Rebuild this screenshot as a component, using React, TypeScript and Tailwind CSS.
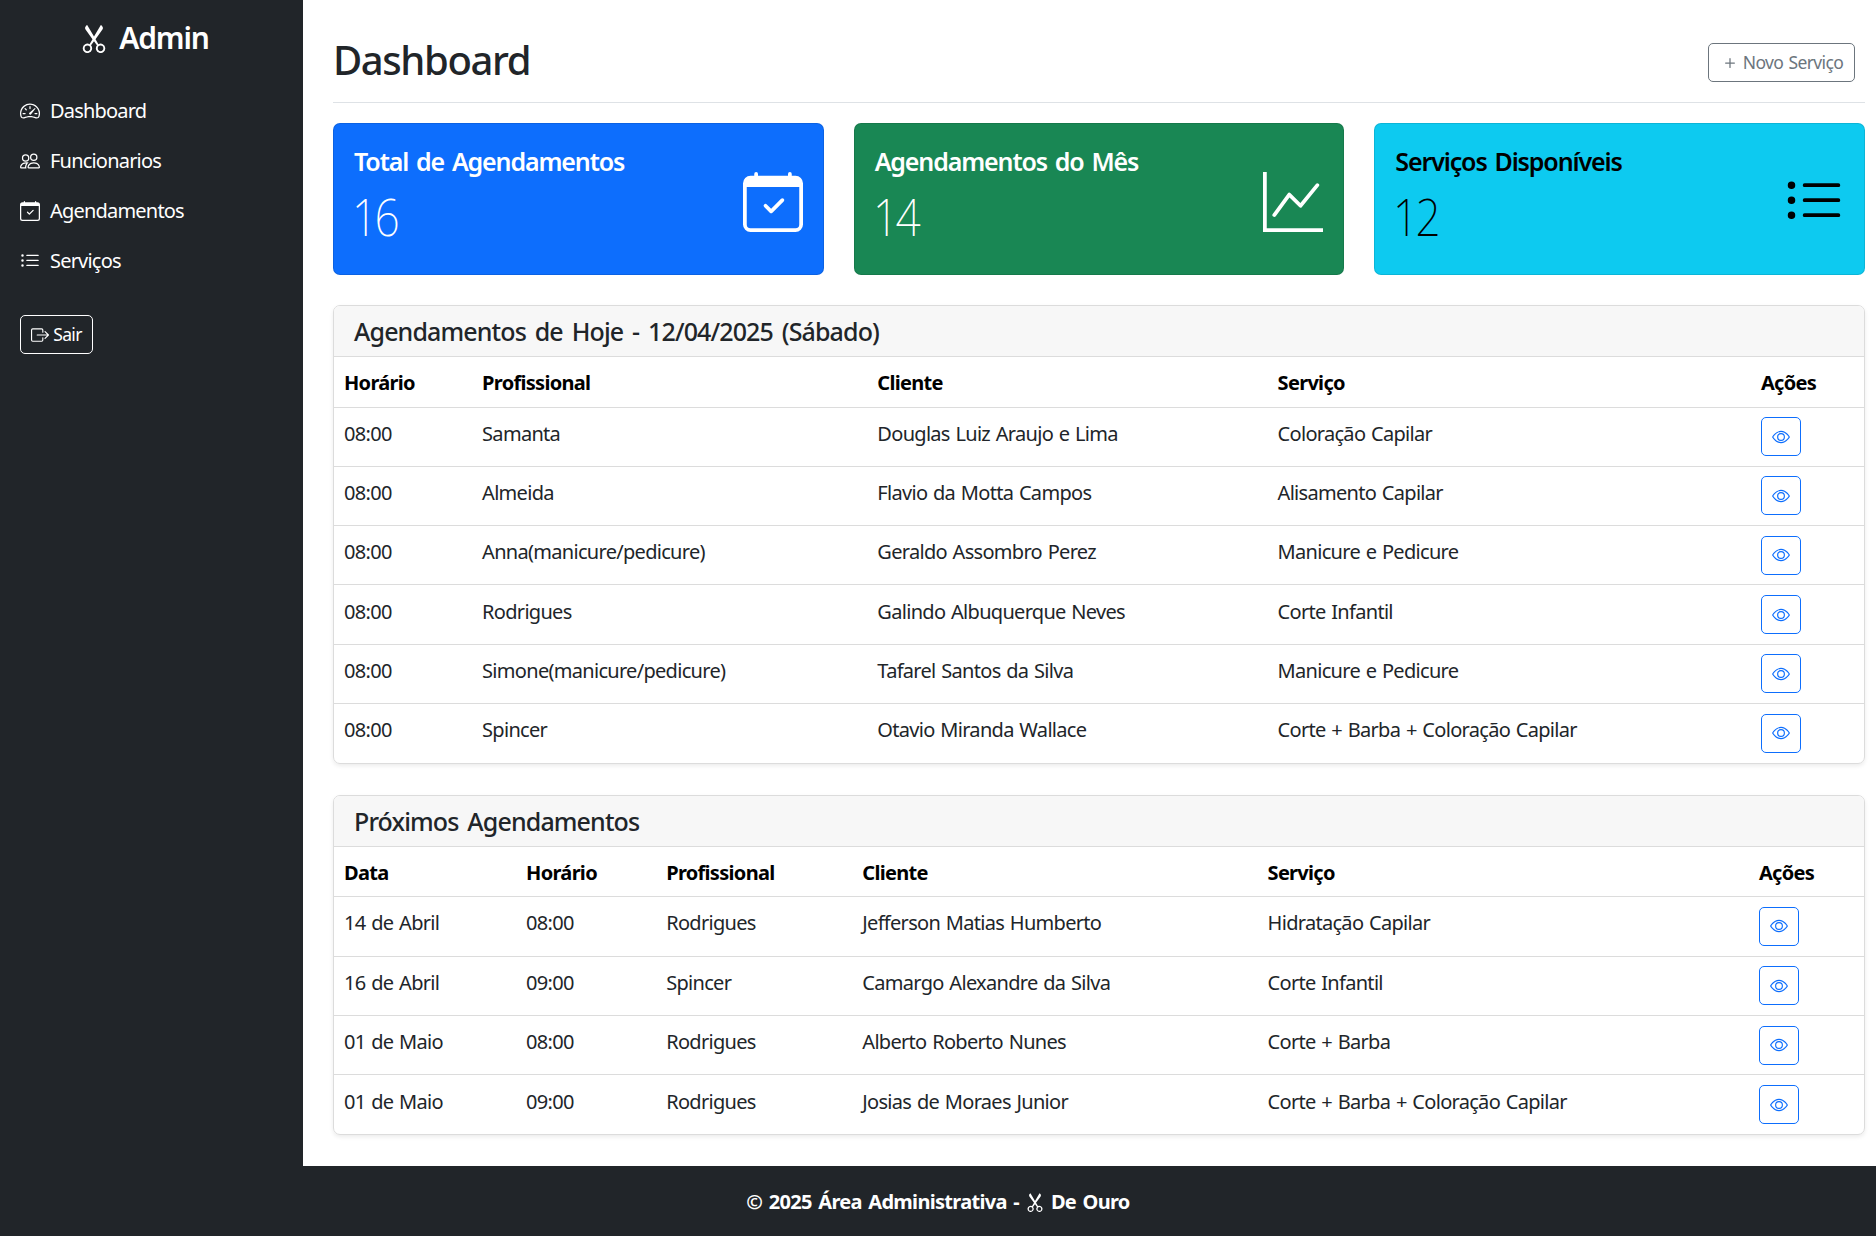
import { ReactNode } from "react";
import {
  BsBoxArrowRight,
  BsCalendarCheck,
  BsEye,
  BsGraphUp,
  BsListUl,
  BsPeople,
  BsPlus,
  BsScissors,
  BsSpeedometer2,
} from "react-icons/bs";

const todayRows = [
  ["08:00", "Samanta", "Douglas Luiz Araujo e Lima", "Coloração Capilar"],
  ["08:00", "Almeida", "Flavio da Motta Campos", "Alisamento Capilar"],
  ["08:00", "Anna(manicure/pedicure)", "Geraldo Assombro Perez", "Manicure e Pedicure"],
  ["08:00", "Rodrigues", "Galindo Albuquerque Neves", "Corte Infantil"],
  ["08:00", "Simone(manicure/pedicure)", "Tafarel Santos da Silva", "Manicure e Pedicure"],
  ["08:00", "Spincer", "Otavio Miranda Wallace", "Corte + Barba + Coloração Capilar"],
];

const nextRows = [
  ["14 de Abril", "08:00", "Rodrigues", "Jefferson Matias Humberto", "Hidratação Capilar"],
  ["16 de Abril", "09:00", "Spincer", "Camargo Alexandre da Silva", "Corte Infantil"],
  ["01 de Maio", "08:00", "Rodrigues", "Alberto Roberto Nunes", "Corte + Barba"],
  ["01 de Maio", "09:00", "Rodrigues", "Josias de Moraes Junior", "Corte + Barba + Coloração Capilar"],
];

const navItems = [
  { label: "Dashboard", icon: <BsSpeedometer2 size={20} /> },
  { label: "Funcionarios", icon: <BsPeople size={20} /> },
  { label: "Agendamentos", icon: <BsCalendarCheck size={20} /> },
  { label: "Serviços", icon: <BsListUl size={20} /> },
];

const StatCard = ({ title, value, icon, className }: { title: string; value: string; icon: ReactNode; className: string }) => (
  <div className={`flex h-[152px] items-center justify-between rounded-[7px] border border-black/10 pl-[20px] pr-[20px] ${className}`}>
    <div className="-mt-[7px]">
      <div className="text-[25px] font-semibold leading-[30px] tracking-[-0.045em] [word-spacing:2.5px]">{title}</div>
      <div className="-ml-[2px] mt-[10px] origin-left scale-x-85 text-[52px] font-extralight leading-[60px] tracking-[-0.06em]">{value}</div>
    </div>
    <div className="mt-[5px]">{icon}</div>
  </div>
);

const EyeButton = () => (
  <button className="flex h-[39px] w-[40px] items-center justify-center rounded-[5px] border border-[#0d6efd] text-[#0d6efd]">
    <BsEye size={18} />
  </button>
);

const DataTable = ({ title, heads, widths, rows }: { title: string; heads: string[]; widths: number[]; rows: string[][] }) => (
  <div className="overflow-hidden rounded-[7px] border border-[#dcdcdc] shadow-[0_2px_4px_rgba(0,0,0,0.08)]">
    <div className="border-b border-[#dcdcdc] bg-[#f7f7f7] px-[20px] py-[10px] text-[25px] font-medium leading-[30px] tracking-[-0.035em] text-[#212529] [word-spacing:3.2px]">
      {title}
    </div>
    <table className="w-full table-fixed border-collapse text-left text-[20px] leading-[30px] tracking-[-0.035em] text-[#212529] [word-spacing:1.2px]">
      <colgroup>
        {widths.map((w, i) => (
          <col key={i} style={{ width: w }} />
        ))}
      </colgroup>
      <thead>
        <tr className="border-b border-[#dcdcdc]">
          {heads.map((h) => (
            <th key={h} className="h-[50px] px-[10px] pt-[3px] font-bold text-black">
              {h}
            </th>
          ))}
        </tr>
      </thead>
      <tbody>
        {rows.map((row, i) => (
          <tr key={i} className={i < rows.length - 1 ? "border-b border-[#dcdcdc]" : ""}>
            {row.map((cell, j) => (
              <td key={j} className="h-[59.3px] px-[10px] pb-[13px] pt-[7px]">
                {cell}
              </td>
            ))}
            <td className="h-[59.3px] px-[10px]">
              <EyeButton />
            </td>
          </tr>
        ))}
      </tbody>
    </table>
  </div>
);

export default function App() {
  return (
    <div className="flex h-[1236px] flex-col overflow-hidden font-['Noto_Sans',sans-serif]">
      <div className="flex flex-1">
        {/* sidebar */}
        <aside className="w-[303px] shrink-0 bg-[#212529] pl-[20px] pr-[30px] text-white">
          <div className="mt-[19px] flex items-center justify-center gap-[10px] pr-[5px] text-[30px] font-semibold leading-[38px] tracking-[-0.04em]">
            <BsScissors size={30} />
            Admin
          </div>
          <nav className="mt-[29px] flex flex-col">
            {navItems.map((item) => (
              <div key={item.label} className="flex h-[50px] items-center gap-[10px] text-[20px] tracking-[-0.04em]">
                {item.icon}
                {item.label}
              </div>
            ))}
          </nav>
          <button className="mt-[29px] flex h-[39px] w-[73px] items-center justify-center gap-[4px] rounded-[5px] border border-white text-[17.5px] tracking-[-0.035em]">
            <BsBoxArrowRight size={18} />
            Sair
          </button>
        </aside>

        {/* main */}
        <main className="flex-1 pl-[30px] pr-[11px]">
          <div className="flex h-[103px] items-center justify-between border-b border-[#dee2e6] pr-[10px] pt-[20px]">
            <h1 className="-mt-[3px] text-[40px] font-medium leading-[48px] tracking-[-0.035em] text-[#212529]">Dashboard</h1>
            <button className="mt-[3px] flex h-[39px] w-[147px] items-center justify-center gap-[3px] rounded-[5px] border border-[#6c757d] text-[17.5px] tracking-[-0.035em] text-[#6c757d] [word-spacing:1.2px]">
              <BsPlus size={20} />
              Novo Serviço
            </button>
          </div>

          <div className="mt-[20px] grid grid-cols-3 gap-[30px]">
            <StatCard title="Total de Agendamentos" value="16" className="bg-[#0d6efd] text-white" icon={<BsCalendarCheck size={60} />} />
            <StatCard title="Agendamentos do Mês" value="14" className="bg-[#198754] text-white" icon={<BsGraphUp size={60} />} />
            <StatCard title="Serviços Disponíveis" value="12" className="bg-[#0dcaf0] text-black" icon={<BsListUl size={60} />} />
          </div>

          <div className="mt-[30px]">
            <DataTable
              title="Agendamentos de Hoje - 12/04/2025 (Sábado)"
              heads={["Horário", "Profissional", "Cliente", "Serviço", "Ações"]}
              widths={[138, 395, 400, 483, 113]}
              rows={todayRows}
            />
          </div>
          <div className="mt-[31px]">
            <DataTable
              title="Próximos Agendamentos"
              heads={["Data", "Horário", "Profissional", "Cliente", "Serviço", "Ações"]}
              widths={[182, 140, 196, 405, 491, 115]}
              rows={nextRows}
            />
          </div>
        </main>
      </div>

      {/* footer */}
      <footer className="flex h-[70px] shrink-0 items-center justify-center gap-[6px] bg-[#212529] pt-[1px] text-[20px] font-bold tracking-[-0.035em] text-white [word-spacing:2px]">
        © 2025 Área Administrativa - <BsScissors size={20} /> De Ouro
      </footer>
    </div>
  );
}
